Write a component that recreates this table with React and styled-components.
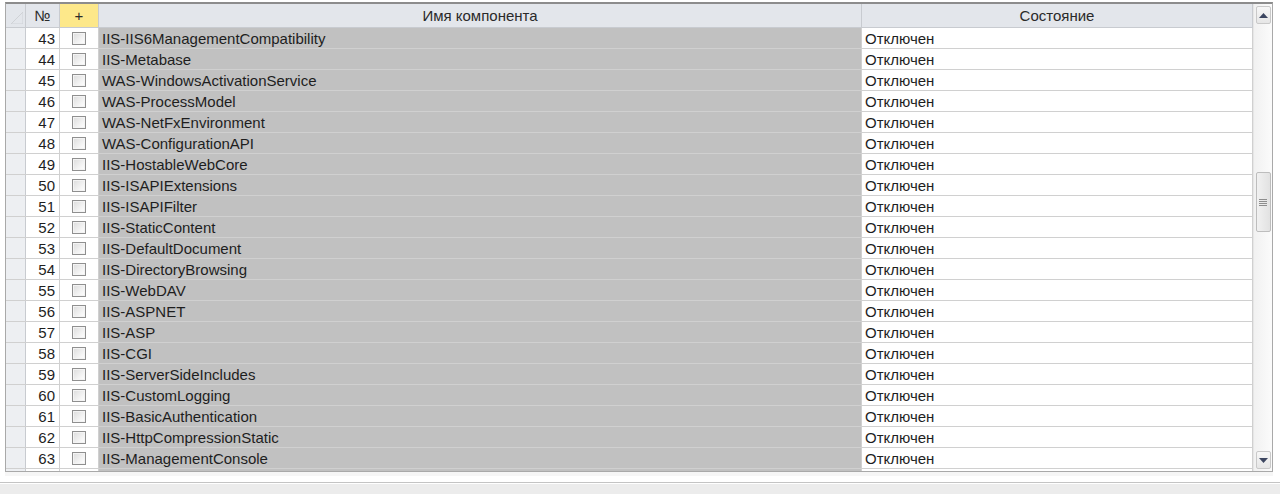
import React from 'react';
import styled, { createGlobalStyle } from 'styled-components';

const GlobalStyle = createGlobalStyle`
  html, body {
    margin: 0;
    padding: 0;
    background: #ffffff;
  }
  body {
    font-family: 'Liberation Sans', Arial, sans-serif;
    font-size: 15px;
    color: #1e1e1e;
  }
`;

const rows = [
  [43, 'IIS-IIS6ManagementCompatibility'],
  [44, 'IIS-Metabase'],
  [45, 'WAS-WindowsActivationService'],
  [46, 'WAS-ProcessModel'],
  [47, 'WAS-NetFxEnvironment'],
  [48, 'WAS-ConfigurationAPI'],
  [49, 'IIS-HostableWebCore'],
  [50, 'IIS-ISAPIExtensions'],
  [51, 'IIS-ISAPIFilter'],
  [52, 'IIS-StaticContent'],
  [53, 'IIS-DefaultDocument'],
  [54, 'IIS-DirectoryBrowsing'],
  [55, 'IIS-WebDAV'],
  [56, 'IIS-ASPNET'],
  [57, 'IIS-ASP'],
  [58, 'IIS-CGI'],
  [59, 'IIS-ServerSideIncludes'],
  [60, 'IIS-CustomLogging'],
  [61, 'IIS-BasicAuthentication'],
  [62, 'IIS-HttpCompressionStatic'],
  [63, 'IIS-ManagementConsole'],
];

const Page = styled.div`
  width: 1280px;
  height: 494px;
  display: flex;
  flex-direction: column;
  overflow: hidden;
`;

const Frame = styled.div`
  margin: 2px 7px 0 5px;
  height: 470px;
  box-sizing: border-box;
  border: 1px solid #a9a9a9;
  border-top: 2px solid #8c8c8c;
  display: flex;
  background: #ffffff;
  overflow: hidden;
`;

const Table = styled.div`
  flex: 1;
  display: flex;
  flex-direction: column;
  overflow: hidden;
`;

const Row = styled.div`
  display: grid;
  grid-template-columns: 20px 34px 39px 763px 1fr;
  height: ${({ $header }) => ($header ? '24px' : '21px')};
  flex-shrink: 0;
  border-bottom: 1px solid ${({ $header }) => ($header ? '#c8cbd0' : '#d0d0d0')};
  box-sizing: border-box;
`;

const HeadCell = styled.div`
  display: flex;
  align-items: center;
  justify-content: center;
  background: ${({ $accent }) => ($accent ? '#fde88a' : '#e3e6eb')};
  border-right: 1px solid #c8cbd0;
  color: #2a2a2a;
  font-size: 15px;
  position: relative;
  overflow: hidden;
`;

const Corner = styled.svg`
  position: absolute;
  right: 2px;
  bottom: 3px;
`;

const Selector = styled.div`
  background: #edeff2;
  border-right: 1px solid #c8cbd0;
`;

const Cell = styled.div`
  display: flex;
  align-items: center;
  justify-content: ${({ $align }) => $align || 'flex-start'};
  padding: 0 ${({ $align }) => ($align === 'flex-end' ? '4px' : '3px')};
  background: ${({ $shade }) => ($shade ? '#c1c1c1' : '#ffffff')};
  border-right: 1px solid #d0d0d0;
  white-space: nowrap;
  overflow: hidden;
  font-size: 15px;
`;

const Check = styled.span`
  width: 12px;
  height: 11px;
  border: 1px solid #8f8f8f;
  background: linear-gradient(135deg, #dcdcdc 0%, #f6f6f6 70%, #ffffff 100%);
  box-shadow: inset 0 0 0 1px #f4f4f4;
`;

const ScrollBar = styled.div`
  width: 19px;
  flex-shrink: 0;
  background: linear-gradient(90deg, #f1f1f1, #fbfbfb);
  border-left: 1px solid #e6e6e6;
  display: flex;
  flex-direction: column;
  align-items: center;
  padding: 2px 0;
  box-sizing: border-box;
`;

const ArrowButton = styled.div`
  width: 15px;
  height: 18px;
  box-sizing: border-box;
  border: 1px solid #c9c9c9;
  border-radius: 2px;
  background: linear-gradient(180deg, #f7f7f7, #e6e6e6);
  display: flex;
  align-items: center;
  justify-content: center;
  margin-top: ${({ $bottom }) => ($bottom ? 'auto' : '0')};
`;

const Thumb = styled.div`
  width: 15px;
  height: 60px;
  margin-top: 148px;
  box-sizing: border-box;
  border: 1px solid #bdbdbd;
  border-radius: 2px;
  background: linear-gradient(90deg, #f1f1f1, #e2e2e2);
  display: flex;
  flex-direction: column;
  align-items: center;
  justify-content: center;
  gap: 1px;
`;

const Grip = styled.span`
  width: 8px;
  height: 1px;
  background: #8d8d8d;
`;

const Spacer = styled.div`
  height: 4px;
  background: #f6f6f6;
  margin: 0 7px 0 5px;
`;

const Footer = styled.div`
  flex: 1;
  margin-top: 6px;
  border-top: 1px solid #c4c4c4;
  box-shadow: inset 0 1px 0 #ffffff;
  background: #ececec;
`;

function Arrow({ down }) {
  return (
    <svg width="9" height="5" viewBox="0 0 9 5">
      <path
        d={down ? 'M0 0 H9 L4.5 5 Z' : 'M0 5 H9 L4.5 0 Z'}
        fill="#3c4660"
      />
    </svg>
  );
}

export default function App() {
  return (
    <Page>
      <GlobalStyle />
      <Frame>
        <Table>
          <Row $header>
            <HeadCell>
              <Corner width="12" height="12" viewBox="0 0 12 12">
                <path d="M12 0 L12 12 L0 12 Z" fill="none" stroke="#cfd2d6" />
              </Corner>
            </HeadCell>
            <HeadCell>№</HeadCell>
            <HeadCell $accent>+</HeadCell>
            <HeadCell>Имя компонента</HeadCell>
            <HeadCell>Состояние</HeadCell>
          </Row>
          {rows.map(([n, name]) => (
            <Row key={n}>
              <Selector />
              <Cell $align="flex-end">{n}</Cell>
              <Cell $align="center">
                <Check />
              </Cell>
              <Cell $shade>{name}</Cell>
              <Cell>Отключен</Cell>
            </Row>
          ))}
          <Row>
            <Selector />
            <Cell />
            <Cell />
            <Cell $shade />
            <Cell />
          </Row>
        </Table>
        <ScrollBar>
          <ArrowButton>
            <Arrow />
          </ArrowButton>
          <Thumb>
            <Grip />
            <Grip />
            <Grip />
            <Grip />
          </Thumb>
          <ArrowButton $bottom>
            <Arrow down />
          </ArrowButton>
        </ScrollBar>
      </Frame>
      <Spacer />
      <Footer />
    </Page>
  );
}
